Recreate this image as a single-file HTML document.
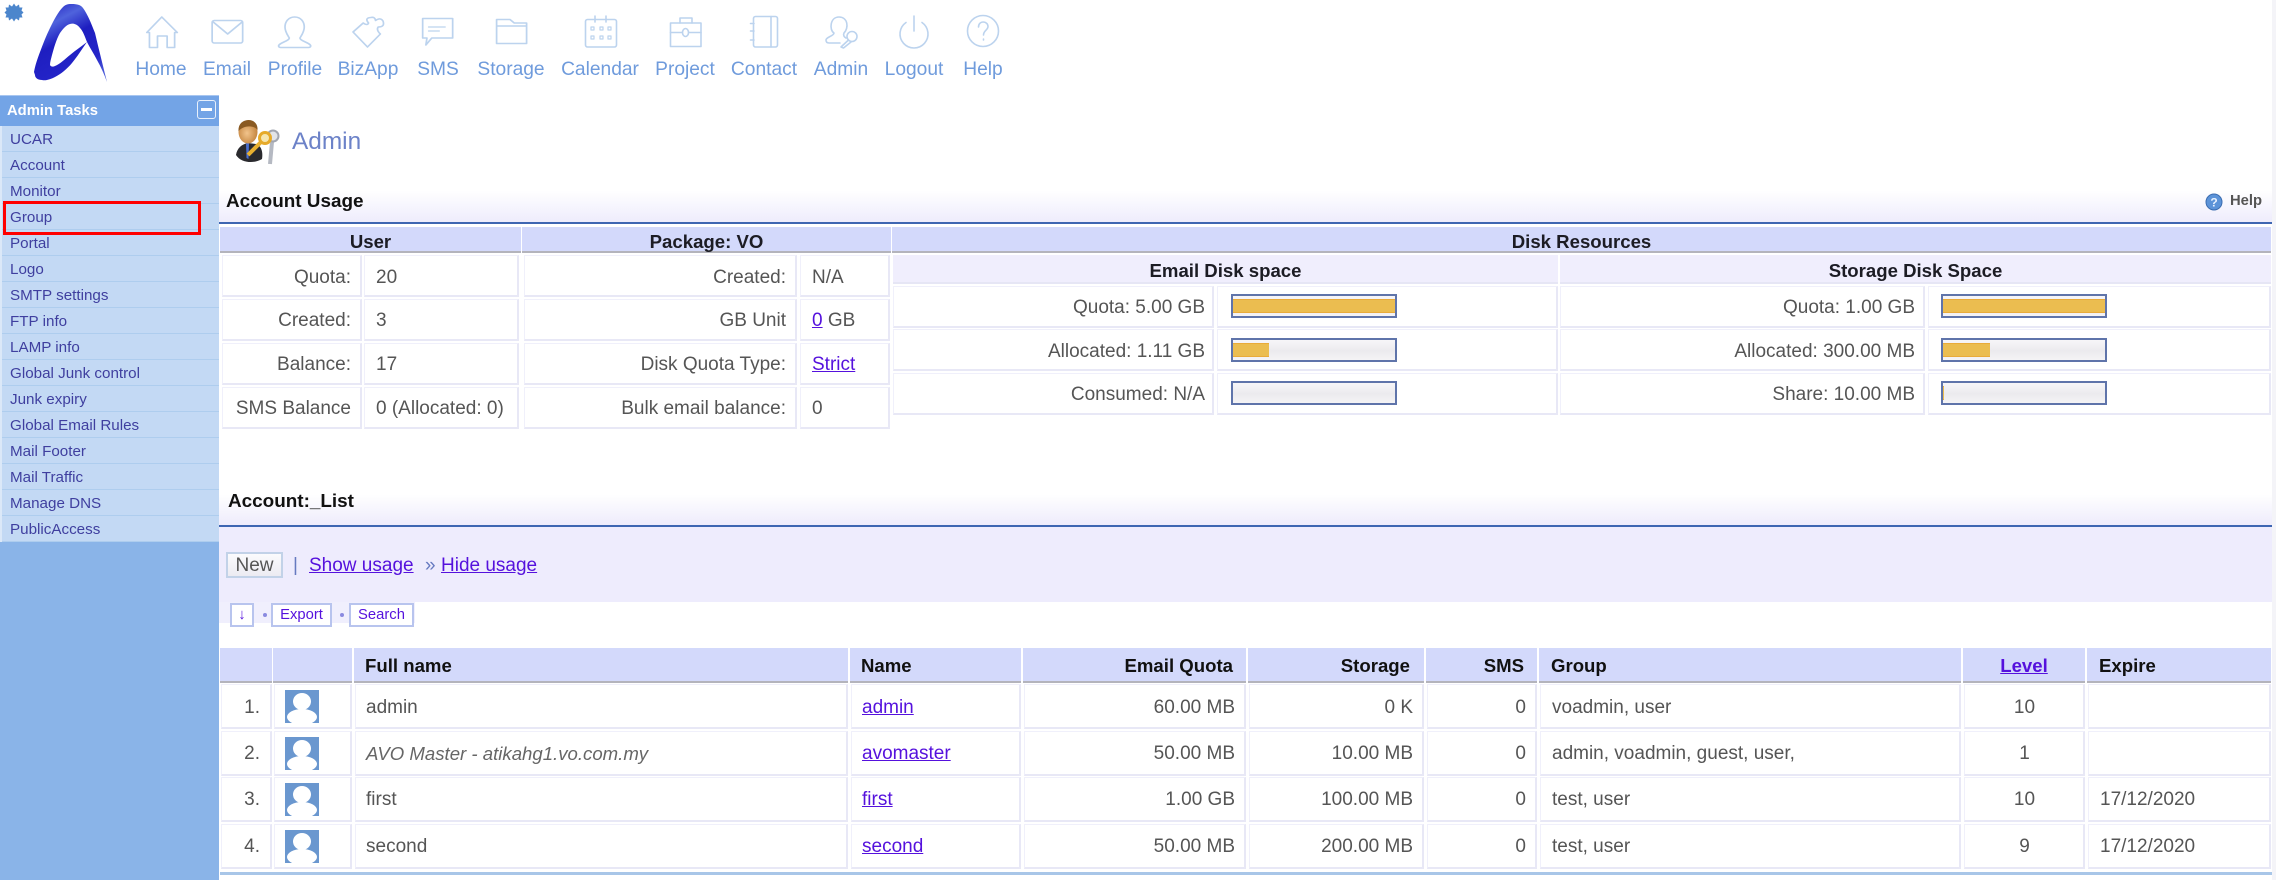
<!DOCTYPE html>
<html><head><meta charset="utf-8"><title>Admin</title>
<style>
html,body{margin:0;padding:0;background:#fff}
body{position:relative;width:2276px;height:880px;overflow:hidden;font-family:"Liberation Sans",Arial,sans-serif;font-size:19px;color:#555}
div,span.t{position:absolute;white-space:nowrap}
.t{line-height:22px;height:22px;margin-top:1px}
.n{top:59px;font-size:19.2px;color:#6f9bdc;line-height:22px;width:100px;text-align:center}
.s{left:0;width:219px;height:25px;background:#c3d9f4;border-bottom:1px solid #aecdee}
.s span{position:absolute;left:10px;top:4px;font-size:15.2px;line-height:20px;color:#3f3f9f}
.b{font-weight:bold;color:#1c1c24;font-size:18.6px}
.hd{background:#d3d9fb;border-bottom:2px solid #b4b4bc;box-sizing:border-box}
.c{background:#fff;border:1px solid #f0f0fb;border-right:2px solid #e8e8f6;border-bottom:2px solid #e8e8f6;box-sizing:border-box}
.sub{background:#f0eefd;border-bottom:2px solid #e6e6f5;box-sizing:border-box}
.grad{left:219px;width:2053px;background:linear-gradient(#fff 0,#fff 25%,#eeecfc 100%)}
.line{left:219px;width:2053px;height:2px;background:#3e66b2}
a{color:#5511dd;text-decoration:underline}
.bar{width:166px;height:24px;border:2px solid #5f74aa;box-sizing:border-box;background:linear-gradient(#f7f6f8,#ebeaee 55%,#f4f3f5)}
.bar i{position:absolute;left:0;top:3px;height:14px;background:#ebbd50;border-top:1px solid #e9ab3a;border-bottom:1px solid #e9ab3a;box-sizing:border-box;display:block}
.sb{height:24px;border:2px solid #b8c4ee;box-sizing:border-box;background:#fff;color:#5511dd;font-size:14.8px;line-height:20px;text-align:center;top:603px}
</style></head><body>

<!-- logo -->
<svg style="position:absolute;left:0;top:0" width="115" height="90" viewBox="0 0 115 90">
<defs><linearGradient id="lg" x1="0.2" y1="0" x2="0.7" y2="1"><stop offset="0" stop-color="#2626c4"/><stop offset=".22" stop-color="#4f63dc"/><stop offset=".45" stop-color="#1e1ec0"/><stop offset=".8" stop-color="#2424c8"/><stop offset="1" stop-color="#4a5ad8"/></linearGradient></defs>
<polygon fill="#4c86cc" points="14,3.500 16,6.500 19,4.500 19.500,7.500 22.500,7.500 21.500,10.500 23.500,12.500 21.500,14.500 22.500,17.500 19.500,17.500 19,20.500 16,18.500 14,21.500 12,18.500 9,20.500 8.500,17.500 5.500,17.500 6.500,14.500 4.500,12.500 6.500,10.500 5.500,7.500 8.500,7.500 9,4.500 12,6.500"/>
<path fill="url(#lg)" d="M34 72C35 66 37 60 40 52C43 44 46 36 50 28C54 20 58 12 63 7C66 4 69 4 72 4C77 4 81 5 83 8C88 15 91 23 95 33C99 50 103 66 107 82C104 74 101 67 97 60C94 54 90 48 87 42C85 37 83 31 80 28C77 24 73 23 70 24C66 25 63 29 60 33C56 40 54 48 52 55C51 59 50 62 50 65C51 67 53 67 55 66C60 64 65 59 70 55C76 50 82 46 87 42C82 49 77 57 72 63C67 69 61 74 55 77C51 79 46 81 42 80C38 80 35 78 35 75Z"/>
</svg>

<!-- nav icons -->
<svg style="position:absolute;left:0;top:0" width="1040" height="55" viewBox="0 0 1040 55" fill="none" stroke="#bcd3ee" stroke-width="1.6" stroke-linejoin="round" stroke-linecap="round">
<g transform="scale(1.0714,1)">
<path d="M137 32.500L151 17L165.500 32.500H163V47.500H156V36H147V47.500H139.500V32.500Z"/>
<rect x="198" y="20.500" width="28.500" height="22.500" rx="2"/><path d="M199 22L212.500 34L226 22"/>
<path d="M275 17C281 17 284 22 284 27C284 32 281 36 280 38C280 41 290 43 290 46C290 47 289 47.500 288 47.500H262C261 47.500 260 47 260 46C260 43 270 41 270 38C269 36 266 32 266 27C266 22 269 17 275 17Z"/>
<path d="M329.500 32L339 23Q343 26 344 23Q340 18 346 17.500Q350 16.500 350.500 20.500Q355 17 357.500 21Q359.500 27 353 27Q351 30 355 34L343 47Z"/>
<path d="M394.500 18.500H422.500V38H403L397.500 45L398.500 38H394.500Z"/><path d="M400 27H415.500M400 31H410" stroke-width="1.300"/>
<path d="M463.500 43.500V19.500H476L480 23H491.500V43.500ZM463.500 26H491.500"/>
</g>
<rect x="585.500" y="19.500" width="31" height="27.500" rx="2"/><path d="M595 16V22M606 16V22"/>
<path d="M591 27h3v3h-3zM600 27h3v3h-3zM608 27h3v3h-3zM591 36h3v3h-3zM600 36h3v3h-3zM608 36h3v3h-3z" stroke-width="1.200"/>
<rect x="670.500" y="23" width="30.500" height="23.500"/><path d="M680 23V18H692V23M670.500 32.500H682M689 32.500H701"/><ellipse cx="685.500" cy="32.500" rx="3" ry="4"/>
<rect x="753.500" y="16.500" width="24" height="30.500" rx="2"/><path d="M771 16.500V47M750.500 23.500H754M750.500 31H754M750.500 40H754"/>
<path d="M834 33C829 30 830 17 839 17C848 17 849 28 844 33C843 35 844 37 846 38M834 33C834 36 826 37 826 40C826 42 827 43 829 43H840"/>
<circle cx="852" cy="36.500" r="5"/><path d="M848.500 40L841 47L843.500 48L851 42"/>
<path d="M906 22.500A14 14 0 1 0 922 22.500"/><path d="M914 16V31"/>
<circle cx="983" cy="31" r="15.500"/><path d="M978.500 27C978.500 23.500 981 22 983 22C986 22 988 24 988 26.500C988 30 983.500 30.500 983.500 35"/><path d="M983.500 39V40"/>
</svg>
<div class="n" style="left:111px">Home</div>
<div class="n" style="left:177px">Email</div>
<div class="n" style="left:245px">Profile</div>
<div class="n" style="left:318px">BizApp</div>
<div class="n" style="left:388px">SMS</div>
<div class="n" style="left:461px">Storage</div>
<div class="n" style="left:550px">Calendar</div>
<div class="n" style="left:635px">Project</div>
<div class="n" style="left:714px">Contact</div>
<div class="n" style="left:791px">Admin</div>
<div class="n" style="left:864px">Logout</div>
<div class="n" style="left:933px">Help</div>

<!-- sidebar -->
<div style="left:0;top:95px;width:219px;height:785px;background:#8ab4e8"></div>
<div style="left:0;top:95px;width:219px;height:31px;background:#73a4e6;border-top:1px solid #a8c6f0;box-sizing:border-box"></div>
<div class="t" style="left:7px;top:99px;font-size:14.8px;font-weight:bold;color:#fff">Admin Tasks</div>
<div style="left:197px;top:100px;width:19px;height:19px;border:1.500px solid #e8f0fb;border-radius:3px;box-sizing:border-box"></div>
<div style="left:201px;top:108px;width:11px;height:3px;background:#fff"></div>
<div class="s" style="top:126px"><span>UCAR</span></div>
<div class="s" style="top:152px"><span>Account</span></div>
<div class="s" style="top:178px"><span>Monitor</span></div>
<div class="s" style="top:204px"><span>Group</span></div>
<div class="s" style="top:230px"><span>Portal</span></div>
<div class="s" style="top:256px"><span>Logo</span></div>
<div class="s" style="top:282px"><span>SMTP settings</span></div>
<div class="s" style="top:308px"><span>FTP info</span></div>
<div class="s" style="top:334px"><span>LAMP info</span></div>
<div class="s" style="top:360px"><span>Global Junk control</span></div>
<div class="s" style="top:386px"><span>Junk expiry</span></div>
<div class="s" style="top:412px"><span>Global Email Rules</span></div>
<div class="s" style="top:438px"><span>Mail Footer</span></div>
<div class="s" style="top:464px"><span>Mail Traffic</span></div>
<div class="s" style="top:490px"><span>Manage DNS</span></div>
<div class="s" style="top:516px"><span>PublicAccess</span></div>
<div style="left:0;top:126px;width:2px;height:416px;background:#dbe8f8"></div>
<div style="left:3px;top:201px;width:198px;height:34px;border:3px solid #f00;box-sizing:border-box"></div>

<!-- title -->
<svg style="position:absolute;left:236px;top:120px" width="44" height="46" viewBox="0 0 44 46">
<defs><radialGradient id="fc" cx=".45" cy=".55" r=".6"><stop offset="0" stop-color="#f2c48c"/><stop offset="1" stop-color="#c07f38"/></radialGradient></defs>
<path fill="#2a2a2e" d="M0 35C1 28 6 24 12 23L20 24C26 26 27 33 26 39C18 44 5 43 0 35Z"/>
<path fill="#4a6fd0" d="M10 23L13 23L12.500 39L10.500 38Z"/>
<ellipse cx="12" cy="12" rx="9.500" ry="11.500" fill="url(#fc)"/>
<path fill="#8a5a22" d="M2.500 11C2 3 8 0 12.500 0C18 0 22 4 21.500 10C18 5 8 5 2.500 11Z"/>
<path stroke="#b5b9c2" stroke-width="4" fill="none" d="M36 22L34 44"/><circle cx="37" cy="16" r="5.500" fill="#e2e4e8" stroke="#a2a6b0" stroke-width="2"/>
<path stroke="#e8b030" stroke-width="4" fill="none" d="M25 22L12 35"/><circle cx="29" cy="18" r="5.500" fill="#f6e6b0" stroke="#e6aa2a" stroke-width="3"/>
</svg>
<div class="t" style="left:292px;top:127px;font-size:24.4px;line-height:28px;height:28px;color:#6c82c8">Admin</div>

<!-- account usage -->
<div class="grad" style="top:180px;height:42px"></div>
<div class="line" style="top:222px"></div>
<div class="t" style="left:226px;top:190px;font-size:18.9px;font-weight:bold;color:#111">Account Usage</div>
<svg style="position:absolute;left:2205px;top:193px" width="18" height="18" viewBox="0 0 18 18"><circle cx="9" cy="9" r="8" fill="#5c93d8" stroke="#3a6cb0"/><text x="9" y="13.500" font-size="12" font-weight="bold" fill="#e8f2ff" text-anchor="middle" font-family="Liberation Sans, sans-serif">?</text></svg>
<div class="t" style="left:2230px;top:189px;font-size:14.8px;font-weight:bold;color:#555">Help</div>

<div class="hd" style="left:220px;top:227px;width:301px;height:26px"></div>
<div class="hd" style="left:522px;top:227px;width:369px;height:26px"></div>
<div class="hd" style="left:892px;top:227px;width:1379px;height:26px"></div>
<div class="t b" style="left:220px;top:230px;width:301px;text-align:center">User</div>
<div class="t b" style="left:522px;top:230px;width:369px;text-align:center">Package: VO</div>
<div class="t b" style="left:892px;top:230px;width:1379px;text-align:center">Disk Resources</div>

<div class="c" style="left:222px;top:255px;width:140px;height:42px"></div><div class="c" style="left:364px;top:255px;width:155px;height:42px"></div>
<div class="c" style="left:222px;top:299px;width:140px;height:42px"></div><div class="c" style="left:364px;top:299px;width:155px;height:42px"></div>
<div class="c" style="left:222px;top:343px;width:140px;height:42px"></div><div class="c" style="left:364px;top:343px;width:155px;height:42px"></div>
<div class="c" style="left:222px;top:387px;width:140px;height:42px"></div><div class="c" style="left:364px;top:387px;width:155px;height:42px"></div>
<div class="c" style="left:524px;top:255px;width:273px;height:42px"></div><div class="c" style="left:800px;top:255px;width:90px;height:42px"></div>
<div class="c" style="left:524px;top:299px;width:273px;height:42px"></div><div class="c" style="left:800px;top:299px;width:90px;height:42px"></div>
<div class="c" style="left:524px;top:343px;width:273px;height:42px"></div><div class="c" style="left:800px;top:343px;width:90px;height:42px"></div>
<div class="c" style="left:524px;top:387px;width:273px;height:42px"></div><div class="c" style="left:800px;top:387px;width:90px;height:42px"></div>

<div class="t" style="right:1925px;top:266px">Quota:</div><div class="t" style="left:376px;top:266px">20</div>
<div class="t" style="right:1925px;top:309px">Created:</div><div class="t" style="left:376px;top:309px">3</div>
<div class="t" style="right:1925px;top:353px">Balance:</div><div class="t" style="left:376px;top:353px">17</div>
<div class="t" style="right:1925px;top:397px">SMS Balance</div><div class="t" style="left:376px;top:397px">0 (Allocated: 0)</div>
<div class="t" style="right:1490px;top:266px">Created:</div><div class="t" style="left:812px;top:266px">N/A</div>
<div class="t" style="right:1490px;top:309px">GB Unit</div><div class="t" style="left:812px;top:309px"><a>0</a> GB</div>
<div class="t" style="right:1490px;top:353px">Disk Quota Type:</div><div class="t" style="left:812px;top:353px"><a>Strict</a></div>
<div class="t" style="right:1490px;top:397px">Bulk email balance:</div><div class="t" style="left:812px;top:397px">0</div>

<div class="sub" style="left:893px;top:255px;width:665px;height:29px"></div>
<div class="sub" style="left:1560px;top:255px;width:711px;height:29px"></div>
<div class="t b" style="left:893px;top:259px;width:665px;text-align:center">Email Disk space</div>
<div class="t b" style="left:1560px;top:259px;width:711px;text-align:center">Storage Disk Space</div>

<div class="c" style="left:893px;top:286px;width:321px;height:42px"></div><div class="c" style="left:1217px;top:286px;width:341px;height:42px"></div>
<div class="c" style="left:893px;top:329px;width:321px;height:42px"></div><div class="c" style="left:1217px;top:329px;width:341px;height:42px"></div>
<div class="c" style="left:893px;top:373px;width:321px;height:42px"></div><div class="c" style="left:1217px;top:373px;width:341px;height:42px"></div>
<div class="c" style="left:1560px;top:286px;width:365px;height:42px"></div><div class="c" style="left:1928px;top:286px;width:343px;height:42px"></div>
<div class="c" style="left:1560px;top:329px;width:365px;height:42px"></div><div class="c" style="left:1928px;top:329px;width:343px;height:42px"></div>
<div class="c" style="left:1560px;top:373px;width:365px;height:42px"></div><div class="c" style="left:1928px;top:373px;width:343px;height:42px"></div>

<div class="t" style="right:1071px;top:296px">Quota: 5.00 GB</div>
<div class="t" style="right:1071px;top:340px">Allocated: 1.11 GB</div>
<div class="t" style="right:1071px;top:383px">Consumed: N/A</div>
<div class="t" style="right:361px;top:296px">Quota: 1.00 GB</div>
<div class="t" style="right:361px;top:340px">Allocated: 300.00 MB</div>
<div class="t" style="right:361px;top:383px">Share: 10.00 MB</div>

<div class="bar" style="left:1231px;top:294px"><i style="width:162px"></i></div>
<div class="bar" style="left:1231px;top:338px"><i style="width:36px"></i></div>
<div class="bar" style="left:1231px;top:381px"></div>
<div class="bar" style="left:1941px;top:294px"><i style="width:162px"></i></div>
<div class="bar" style="left:1941px;top:338px"><i style="width:47px"></i></div>
<div class="bar" style="left:1941px;top:381px"><i style="width:1px"></i></div>

<!-- account list -->
<div class="grad" style="top:484px;height:41px"></div>
<div class="line" style="top:525px"></div>
<div class="t" style="left:228px;top:490px;font-size:18.9px;font-weight:bold;color:#111">Account:_List</div>
<div style="left:219px;top:527px;width:2053px;height:75px;background:#eeecfd"></div>
<div style="left:219px;top:602px;width:196px;height:21px;background:#f0effd"></div>

<div style="left:226px;top:552px;width:57px;height:26px;border:2px solid #c2d2e8;box-sizing:border-box;background:linear-gradient(#fbfbfd,#ecebf2)"></div>
<div class="t" style="left:226px;top:554px;width:57px;text-align:center;color:#555">New</div>
<div class="t" style="left:293px;top:554px;color:#667ac0">|</div>
<div class="t" style="left:309px;top:554px"><a>Show usage</a></div>
<div class="t" style="left:425px;top:554px;color:#667ac0">»</div>
<div class="t" style="left:441px;top:554px"><a>Hide usage</a></div>

<div class="sb" style="left:230px;width:24px">↓</div>
<div style="left:263px;top:613px;width:4px;height:4px;border-radius:2px;background:#8a8ae0"></div>
<div class="sb" style="left:271px;width:61px">Export</div>
<div style="left:340px;top:613px;width:4px;height:4px;border-radius:2px;background:#8a8ae0"></div>
<div class="sb" style="left:349px;width:65px">Search</div>

<div class="hd" style="left:220px;top:648px;width:52px;height:35px"></div>
<div class="hd" style="left:273px;top:648px;width:79px;height:35px"></div>
<div class="hd" style="left:354px;top:648px;width:494px;height:35px"></div>
<div class="hd" style="left:850px;top:648px;width:171px;height:35px"></div>
<div class="hd" style="left:1023px;top:648px;width:223px;height:35px"></div>
<div class="hd" style="left:1248px;top:648px;width:176px;height:35px"></div>
<div class="hd" style="left:1426px;top:648px;width:111px;height:35px"></div>
<div class="hd" style="left:1539px;top:648px;width:422px;height:35px"></div>
<div class="hd" style="left:1963px;top:648px;width:122px;height:35px"></div>
<div class="hd" style="left:2087px;top:648px;width:184px;height:35px"></div>
<div class="t b" style="left:365px;top:654px;color:#111">Full name</div>
<div class="t b" style="left:861px;top:654px;color:#111">Name</div>
<div class="t b" style="right:1043px;top:654px;color:#111">Email Quota</div>
<div class="t b" style="right:866px;top:654px;color:#111">Storage</div>
<div class="t b" style="right:752px;top:654px;color:#111">SMS</div>
<div class="t b" style="left:1551px;top:654px;color:#111">Group</div>
<div class="t" style="left:1963px;top:654px;width:122px;text-align:center;font-weight:bold;font-size:18.6px"><a>Level</a></div>
<div class="t b" style="left:2099px;top:654px;color:#111">Expire</div>

<!-- row cells -->
<div class="c" style="left:221px;top:684px;width:51px;height:45px"></div><div class="c" style="left:274px;top:684px;width:78px;height:45px"></div><div class="c" style="left:355px;top:684px;width:493px;height:45px"></div><div class="c" style="left:851px;top:684px;width:170px;height:45px"></div><div class="c" style="left:1024px;top:684px;width:222px;height:45px"></div><div class="c" style="left:1249px;top:684px;width:175px;height:45px"></div><div class="c" style="left:1427px;top:684px;width:110px;height:45px"></div><div class="c" style="left:1540px;top:684px;width:421px;height:45px"></div><div class="c" style="left:1964px;top:684px;width:121px;height:45px"></div><div class="c" style="left:2088px;top:684px;width:183px;height:45px"></div>
<div class="c" style="left:221px;top:731px;width:51px;height:45px"></div><div class="c" style="left:274px;top:731px;width:78px;height:45px"></div><div class="c" style="left:355px;top:731px;width:493px;height:45px"></div><div class="c" style="left:851px;top:731px;width:170px;height:45px"></div><div class="c" style="left:1024px;top:731px;width:222px;height:45px"></div><div class="c" style="left:1249px;top:731px;width:175px;height:45px"></div><div class="c" style="left:1427px;top:731px;width:110px;height:45px"></div><div class="c" style="left:1540px;top:731px;width:421px;height:45px"></div><div class="c" style="left:1964px;top:731px;width:121px;height:45px"></div><div class="c" style="left:2088px;top:731px;width:183px;height:45px"></div>
<div class="c" style="left:221px;top:777px;width:51px;height:45px"></div><div class="c" style="left:274px;top:777px;width:78px;height:45px"></div><div class="c" style="left:355px;top:777px;width:493px;height:45px"></div><div class="c" style="left:851px;top:777px;width:170px;height:45px"></div><div class="c" style="left:1024px;top:777px;width:222px;height:45px"></div><div class="c" style="left:1249px;top:777px;width:175px;height:45px"></div><div class="c" style="left:1427px;top:777px;width:110px;height:45px"></div><div class="c" style="left:1540px;top:777px;width:421px;height:45px"></div><div class="c" style="left:1964px;top:777px;width:121px;height:45px"></div><div class="c" style="left:2088px;top:777px;width:183px;height:45px"></div>
<div class="c" style="left:221px;top:824px;width:51px;height:45px"></div><div class="c" style="left:274px;top:824px;width:78px;height:45px"></div><div class="c" style="left:355px;top:824px;width:493px;height:45px"></div><div class="c" style="left:851px;top:824px;width:170px;height:45px"></div><div class="c" style="left:1024px;top:824px;width:222px;height:45px"></div><div class="c" style="left:1249px;top:824px;width:175px;height:45px"></div><div class="c" style="left:1427px;top:824px;width:110px;height:45px"></div><div class="c" style="left:1540px;top:824px;width:421px;height:45px"></div><div class="c" style="left:1964px;top:824px;width:121px;height:45px"></div><div class="c" style="left:2088px;top:824px;width:183px;height:45px"></div>
<div style="left:220px;top:872px;width:2052px;height:3px;background:#a8c6e8"></div>

<!-- avatars -->
<svg style="position:absolute;left:285px;top:690px" width="34" height="33" viewBox="0 0 34 33"><rect width="34" height="33" fill="#6a97cf"/><ellipse cx="17" cy="11.500" rx="9" ry="8.500" fill="#fff"/><ellipse cx="17" cy="27" rx="15" ry="8" fill="#fff"/></svg>
<svg style="position:absolute;left:285px;top:737px" width="34" height="33" viewBox="0 0 34 33"><rect width="34" height="33" fill="#6a97cf"/><ellipse cx="17" cy="11.500" rx="9" ry="8.500" fill="#fff"/><ellipse cx="17" cy="27" rx="15" ry="8" fill="#fff"/></svg>
<svg style="position:absolute;left:285px;top:783px" width="34" height="33" viewBox="0 0 34 33"><rect width="34" height="33" fill="#6a97cf"/><ellipse cx="17" cy="11.500" rx="9" ry="8.500" fill="#fff"/><ellipse cx="17" cy="27" rx="15" ry="8" fill="#fff"/></svg>
<svg style="position:absolute;left:285px;top:830px" width="34" height="33" viewBox="0 0 34 33"><rect width="34" height="33" fill="#6a97cf"/><ellipse cx="17" cy="11.500" rx="9" ry="8.500" fill="#fff"/><ellipse cx="17" cy="27" rx="15" ry="8" fill="#fff"/></svg>

<!-- row 1 -->
<div class="t" style="right:2016px;top:696px">1.</div><div class="t" style="left:366px;top:696px">admin</div><div class="t" style="left:862px;top:696px"><a>admin</a></div><div class="t" style="right:1041px;top:696px">60.00 MB</div><div class="t" style="right:863px;top:696px">0 K</div><div class="t" style="right:750px;top:696px">0</div><div class="t" style="left:1552px;top:696px">voadmin, user</div><div class="t" style="left:1964px;top:696px;width:121px;text-align:center">10</div>
<!-- row 2 -->
<div class="t" style="right:2016px;top:742px">2.</div><div class="t" style="left:366px;top:742px;font-style:italic;font-size:18.6px;color:#666">AVO Master - atikahg1.vo.com.my</div><div class="t" style="left:862px;top:742px"><a>avomaster</a></div><div class="t" style="right:1041px;top:742px">50.00 MB</div><div class="t" style="right:863px;top:742px">10.00 MB</div><div class="t" style="right:750px;top:742px">0</div><div class="t" style="left:1552px;top:742px">admin, voadmin, guest, user,</div><div class="t" style="left:1964px;top:742px;width:121px;text-align:center">1</div>
<!-- row 3 -->
<div class="t" style="right:2016px;top:788px">3.</div><div class="t" style="left:366px;top:788px">first</div><div class="t" style="left:862px;top:788px"><a>first</a></div><div class="t" style="right:1041px;top:788px">1.00 GB</div><div class="t" style="right:863px;top:788px">100.00 MB</div><div class="t" style="right:750px;top:788px">0</div><div class="t" style="left:1552px;top:788px">test, user</div><div class="t" style="left:1964px;top:788px;width:121px;text-align:center">10</div><div class="t" style="left:2100px;top:788px">17/12/2020</div>
<!-- row 4 -->
<div class="t" style="right:2016px;top:835px">4.</div><div class="t" style="left:366px;top:835px">second</div><div class="t" style="left:862px;top:835px"><a>second</a></div><div class="t" style="right:1041px;top:835px">50.00 MB</div><div class="t" style="right:863px;top:835px">200.00 MB</div><div class="t" style="right:750px;top:835px">0</div><div class="t" style="left:1552px;top:835px">test, user</div><div class="t" style="left:1964px;top:835px;width:121px;text-align:center">9</div><div class="t" style="left:2100px;top:835px">17/12/2020</div>

<div style="left:2272px;top:0;width:4px;height:880px;background:#f4f4f8"></div>
</body></html>
